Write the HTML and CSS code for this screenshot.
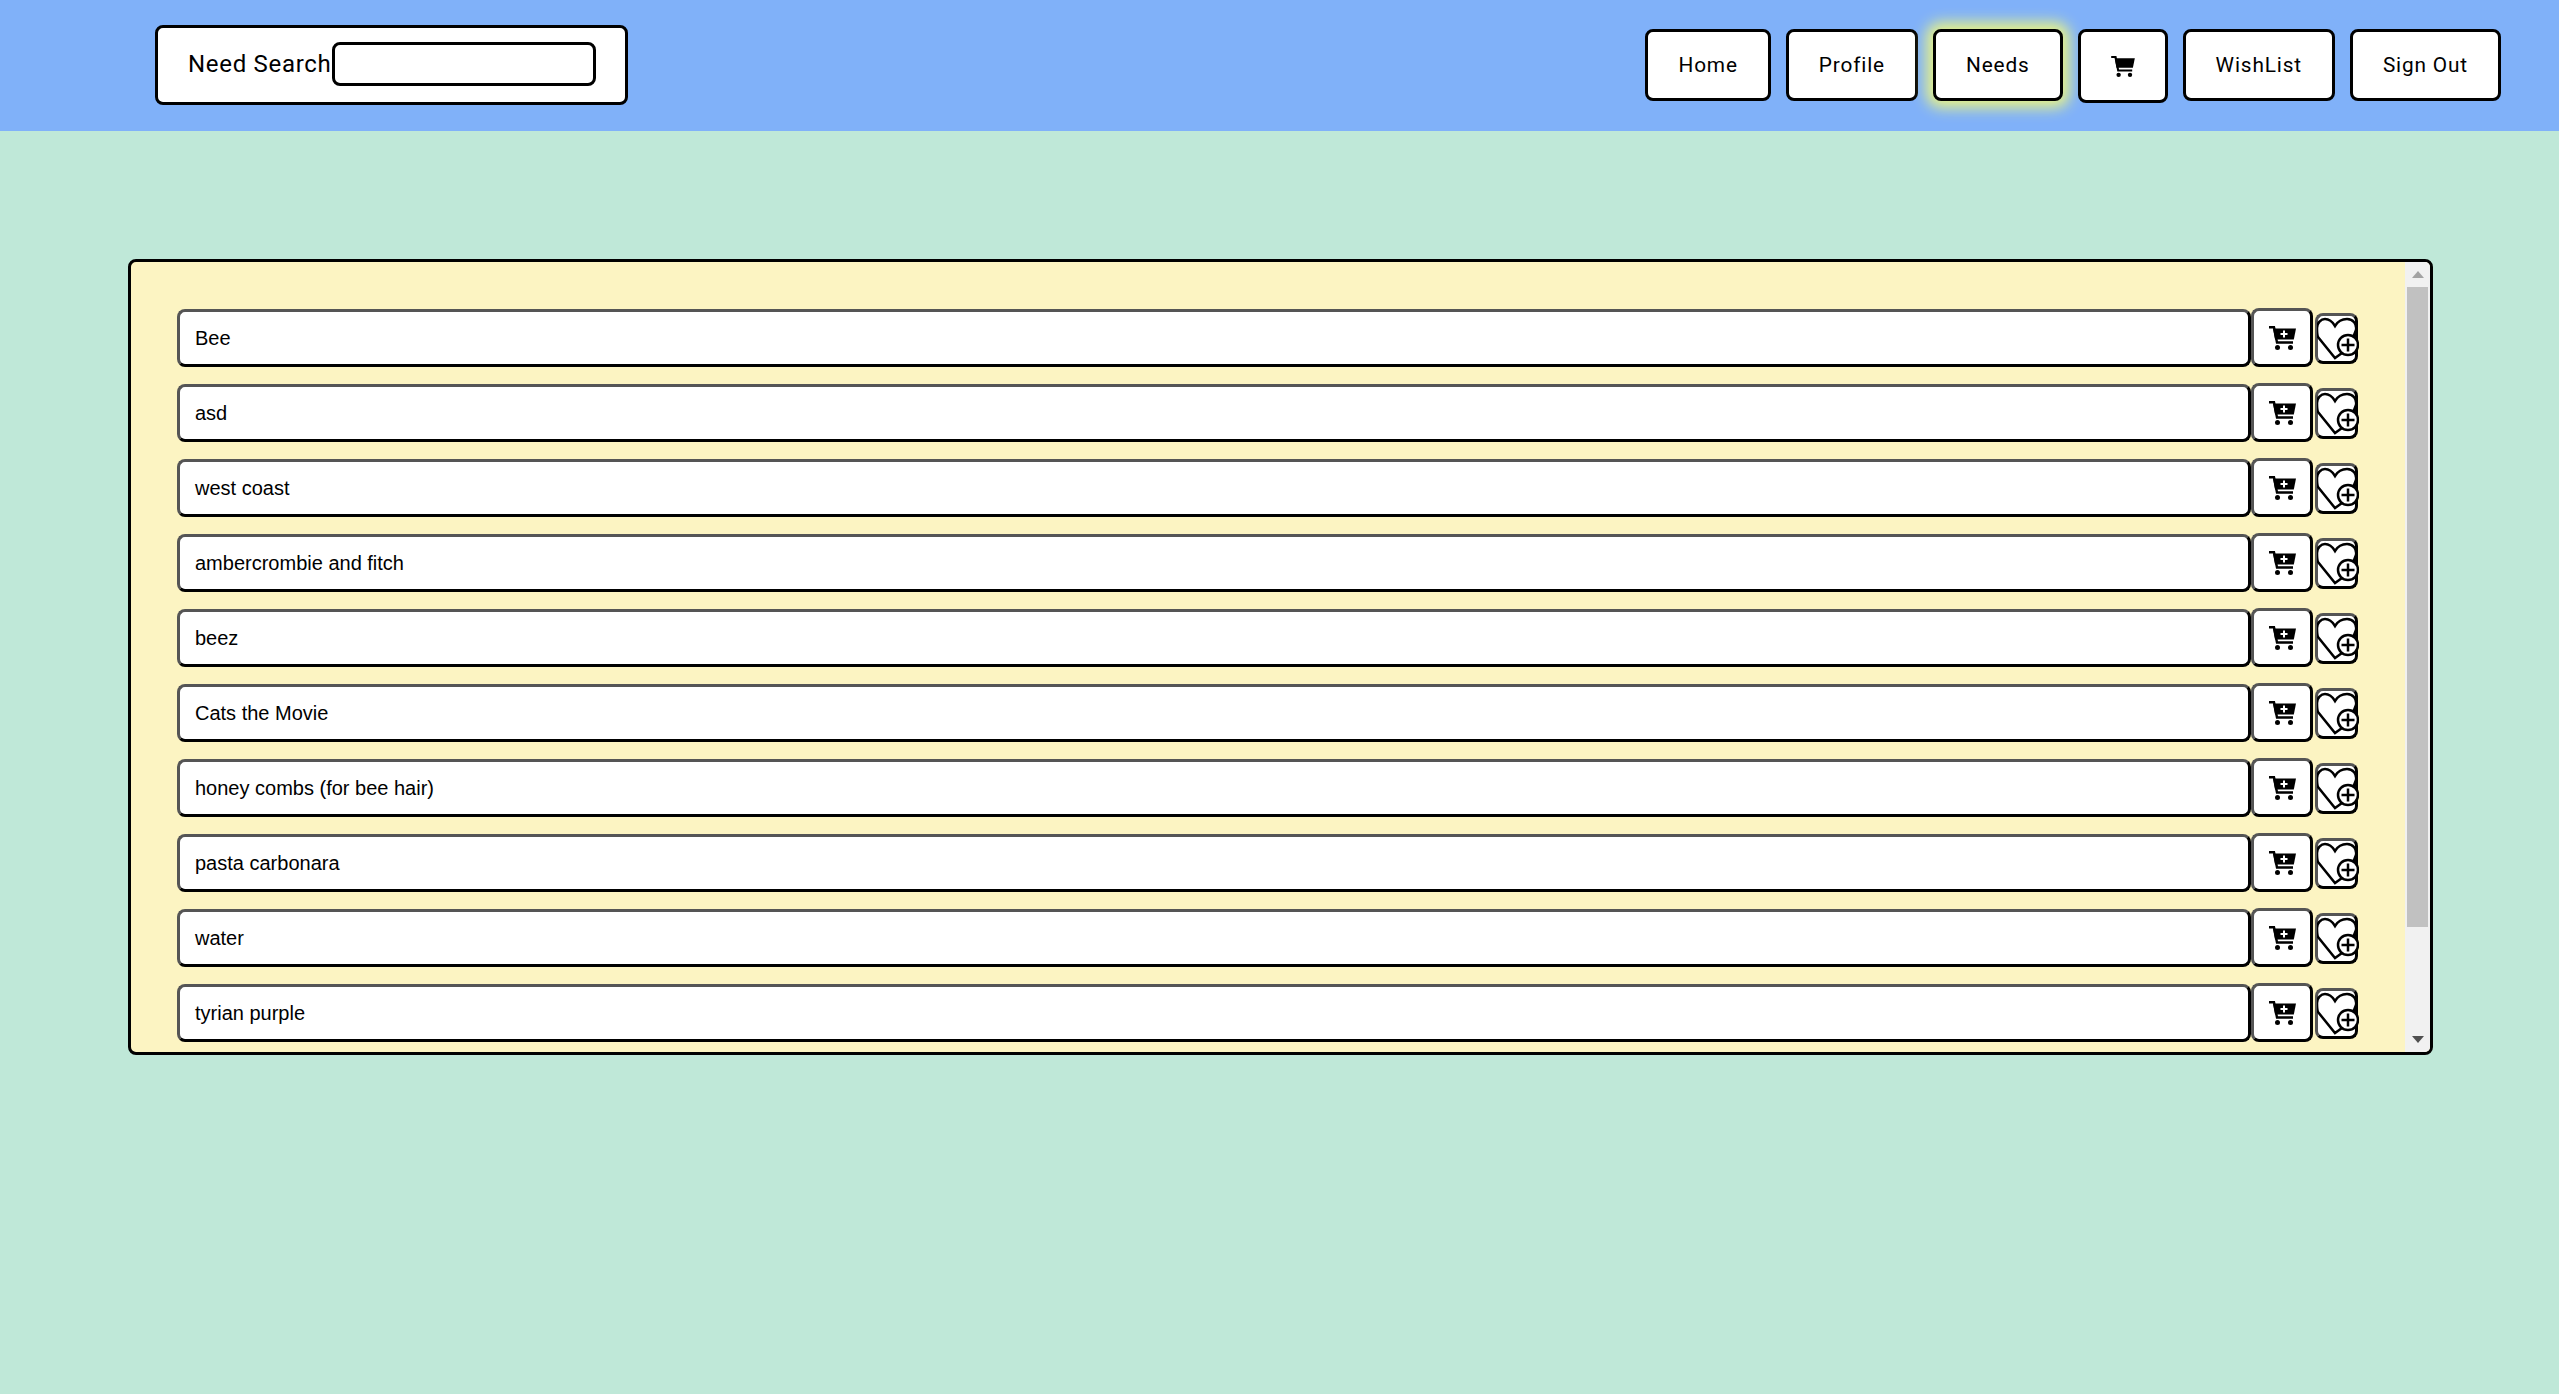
FILE: index.html
```html
<!DOCTYPE html>
<html lang="en">
<head>
    <meta charset="UTF-8">
    <title>Needs</title>
    <link rel="stylesheet" href="styles.css">
</head>
<body>
    <svg class="defs" width="0" height="0">
        <symbol id="cart" viewBox="0 0 27 24">
            <path class="cart-frame" d="M0 1.2 H5 L8 16.5 H24"/>
            <path d="M4 2.5 H27 L24.8 13.5 H6 Z"/>
            <circle cx="8.5" cy="21.5" r="2.5"/>
            <circle cx="21.5" cy="21.5" r="2.5"/>
        </symbol>
        <symbol id="cart-plus" viewBox="0 0 27 24">
            <path class="cart-frame" d="M0 1.2 H5 L8 16.5 H24"/>
            <path d="M4 2.5 H27 L24.8 13.5 H6 Z"/>
            <circle cx="8.5" cy="21.5" r="2.5"/>
            <circle cx="21.5" cy="21.5" r="2.5"/>
            <path class="cart-cross" d="M15 4.5 V11.5 M11.5 8 H18.5"/>
        </symbol>
        <symbol id="heart-plus" viewBox="0 0 42 45">
            <path class="heart-line" d="M18 10 C15 5 11 3 8 3 C4 3 0 7 0 12 C0 16 0 19 1 21 L18 42 L32 32 L39 14 C40 8 36 3 30 3 C25 3 21 5 18 10 Z"/>
            <circle class="heart-dot" cx="31" cy="29" r="10"/>
            <path class="heart-cross" d="M31 22.5 V35.5 M24.5 29 H37.5"/>
        </symbol>
    </svg>

    <header class="topbar">
        <div class="search-box">
            <label for="needSearch">Need Search</label>
            <input type="text" id="needSearch">
        </div>
        <nav class="nav">
            <button class="nav-btn">Home</button>
            <button class="nav-btn">Profile</button>
            <button class="nav-btn active">Needs</button>
            <button class="nav-btn cart-btn"><svg class="nav-cart"><use href="#cart"/></svg></button>
            <button class="nav-btn">WishList</button>
            <button class="nav-btn">Sign Out</button>
        </nav>
    </header>

    <main class="panel">
        <div class="need-list">
            <div class="need-row">
                <div class="need-name">Bee</div>
                <button class="add-cart"><svg class="row-cart"><use href="#cart-plus"/></svg></button>
                <button class="add-wish"><svg class="row-heart"><use href="#heart-plus"/></svg></button>
            </div>
            <div class="need-row">
                <div class="need-name">asd</div>
                <button class="add-cart"><svg class="row-cart"><use href="#cart-plus"/></svg></button>
                <button class="add-wish"><svg class="row-heart"><use href="#heart-plus"/></svg></button>
            </div>
            <div class="need-row">
                <div class="need-name">west coast</div>
                <button class="add-cart"><svg class="row-cart"><use href="#cart-plus"/></svg></button>
                <button class="add-wish"><svg class="row-heart"><use href="#heart-plus"/></svg></button>
            </div>
            <div class="need-row">
                <div class="need-name">ambercrombie and fitch</div>
                <button class="add-cart"><svg class="row-cart"><use href="#cart-plus"/></svg></button>
                <button class="add-wish"><svg class="row-heart"><use href="#heart-plus"/></svg></button>
            </div>
            <div class="need-row">
                <div class="need-name">beez</div>
                <button class="add-cart"><svg class="row-cart"><use href="#cart-plus"/></svg></button>
                <button class="add-wish"><svg class="row-heart"><use href="#heart-plus"/></svg></button>
            </div>
            <div class="need-row">
                <div class="need-name">Cats the Movie</div>
                <button class="add-cart"><svg class="row-cart"><use href="#cart-plus"/></svg></button>
                <button class="add-wish"><svg class="row-heart"><use href="#heart-plus"/></svg></button>
            </div>
            <div class="need-row">
                <div class="need-name">honey combs (for bee hair)</div>
                <button class="add-cart"><svg class="row-cart"><use href="#cart-plus"/></svg></button>
                <button class="add-wish"><svg class="row-heart"><use href="#heart-plus"/></svg></button>
            </div>
            <div class="need-row">
                <div class="need-name">pasta carbonara</div>
                <button class="add-cart"><svg class="row-cart"><use href="#cart-plus"/></svg></button>
                <button class="add-wish"><svg class="row-heart"><use href="#heart-plus"/></svg></button>
            </div>
            <div class="need-row">
                <div class="need-name">water</div>
                <button class="add-cart"><svg class="row-cart"><use href="#cart-plus"/></svg></button>
                <button class="add-wish"><svg class="row-heart"><use href="#heart-plus"/></svg></button>
            </div>
            <div class="need-row">
                <div class="need-name">tyrian purple</div>
                <button class="add-cart"><svg class="row-cart"><use href="#cart-plus"/></svg></button>
                <button class="add-wish"><svg class="row-heart"><use href="#heart-plus"/></svg></button>
            </div>
        </div>
        <div class="scrollbar">
            <div class="scroll-btn"><span class="arrow-up"></span></div>
            <div class="scroll-track"><div class="scroll-thumb"></div></div>
            <div class="scroll-btn"><span class="arrow-down"></span></div>
        </div>
    </main>
</body>
</html>
```

FILE: styles.css
```css
html, body { height: 100%; }
body { margin: 0; background: #bfe8d8; font-family: "Liberation Sans", Arial, sans-serif; color: #000; }
.defs { display: block; position: absolute; }

.topbar { display: flex; justify-content: space-between; align-items: flex-start; height: 131px; padding: 0 58px 0 155px; background: #80b1f9; box-sizing: border-box; }
.search-box { display: flex; align-items: center; width: 473px; height: 80px; margin-top: 25px; padding: 0 0 2px 30px; background: white; border: 3px solid black; border-radius: 8px; box-sizing: border-box; font-family: Roboto, sans-serif; font-size: 24px; letter-spacing: 0.7px; }
.search-box input { width: 264px; height: 44px; margin: 0; padding: 0; background: white; border: 3px solid black; border-radius: 8px; box-sizing: border-box; }

.nav { display: flex; align-items: flex-start; gap: 15px; margin-top: 29px; }
.nav-btn { height: 72px; padding: 0 30px 1px; background: white; border: 3px solid black; border-radius: 8px; box-sizing: border-box; font-family: Roboto, sans-serif; font-size: 20.8px; letter-spacing: 0.85px; color: #000; }
.nav-btn.active { box-shadow: 0 0 14px 7px #e6f288; }
.cart-btn { display: flex; align-items: center; justify-content: center; width: 90px; height: 74px; padding: 0; }
.nav-cart { width: 24px; height: 21px; }

.panel { display: flex; width: 2305px; height: 796px; margin: 128px 0 0 128px; background: #fcf4c2; border: 3px solid black; border-radius: 8px; box-sizing: border-box; overflow: hidden; }
.need-list { flex: 1; display: flex; flex-direction: column; gap: 17px; padding: 47px 47px 0 46px; overflow: hidden; }
.need-row { display: flex; align-items: flex-start; height: 58px; flex-shrink: 0; }
.need-name { flex: 1; display: flex; align-items: center; height: 58px; padding-left: 15px; background: white; border: 3px solid; border-color: #555 #000 #000 #555; border-radius: 8px; box-sizing: border-box; font-size: 20px; }
.add-cart { display: flex; align-items: center; justify-content: center; width: 62px; height: 59px; margin-top: -1px; padding: 0; background: white; border: 3px solid; border-color: #555 #000 #000 #555; border-radius: 8px; box-sizing: border-box; }
.row-cart { width: 27px; height: 24px; }
.add-wish { display: flex; width: 43px; height: 51px; margin: 4px 0 0 2px; padding: 0; background: white; border: 3px solid; border-color: #555 #000 #000 #555; border-radius: 8px; box-sizing: border-box; }
.row-heart { width: 42px; height: 45px; margin: 0 -5px 0 -1px; flex-shrink: 0; }
.cart-frame { fill: none; stroke: black; stroke-width: 2.4; }
.cart-cross { fill: none; stroke: white; stroke-width: 2; }
.heart-line { fill: white; stroke: black; stroke-width: 2.5; }
.heart-dot { fill: white; stroke: black; stroke-width: 2.5; }
.heart-cross { fill: none; stroke: black; stroke-width: 2.5; }

.scrollbar { display: flex; flex-direction: column; width: 25px; background: #f1f1f1; }
.scroll-btn { display: flex; align-items: center; justify-content: center; height: 25px; flex-shrink: 0; }
.scroll-track { flex: 1; padding: 0 2px; }
.scroll-thumb { height: 640px; background: #c1c1c1; }
.arrow-up { width: 0; height: 0; border-left: 6px solid transparent; border-right: 6px solid transparent; border-bottom: 7px solid #a3a3a3; }
.arrow-down { width: 0; height: 0; border-left: 6px solid transparent; border-right: 6px solid transparent; border-top: 7px solid #505050; }
```
